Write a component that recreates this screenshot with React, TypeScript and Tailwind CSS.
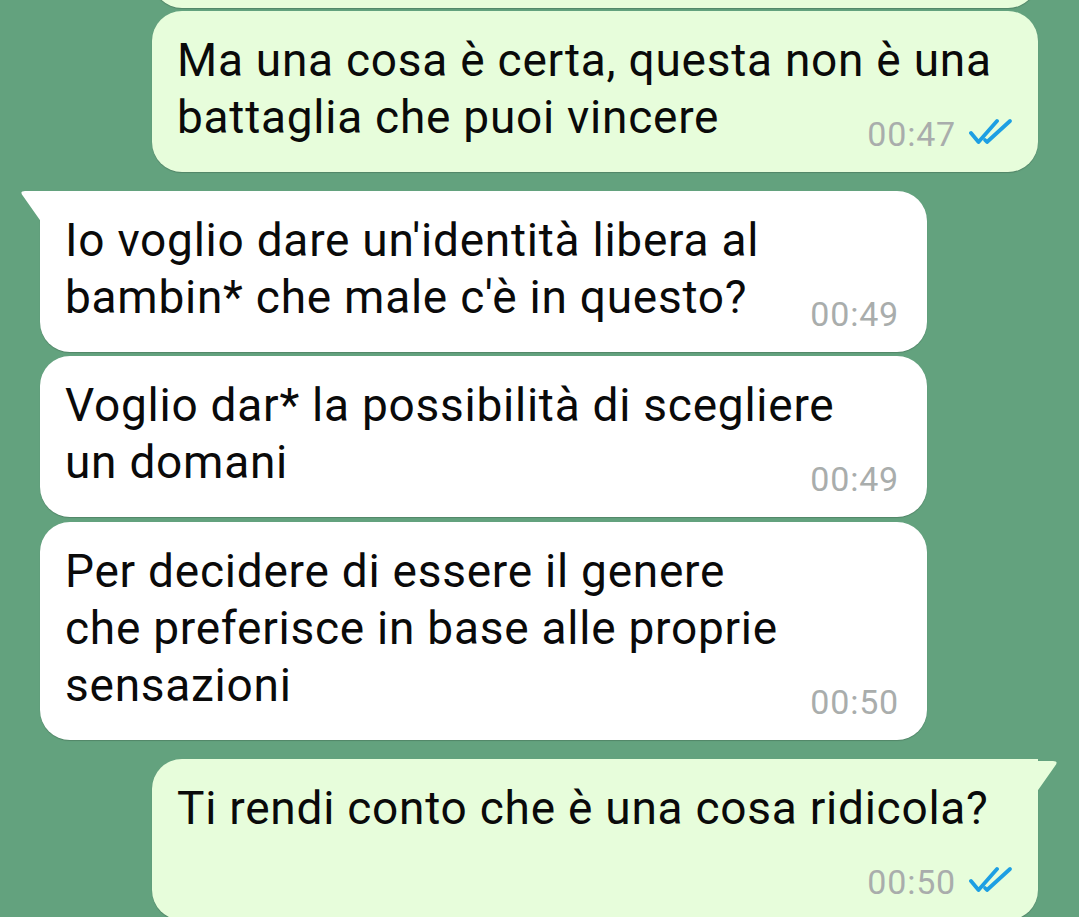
import React from "react";

type Msg = {
  side: "in" | "out";
  tail?: boolean;
  lines: string[];
  time: string;
  below?: boolean;
  mt: string;
};

const Check = () => (
  <svg width="44" height="28" viewBox="0 0 44 28" fill="none" className="ml-[13px] mt-[-4px]">
    <path d="M2 15 L9.5 24 L28 3" stroke="#1d9fe3" strokeWidth="3.8" strokeLinecap="round" strokeLinejoin="round" />
    <path d="M16 22 L18 24 L41 3" stroke="#1d9fe3" strokeWidth="3.8" strokeLinecap="round" strokeLinejoin="round" />
  </svg>
);

const Time = ({ time, out }: { time: string; out: boolean }) => (
  <span className="flex items-center h-[40px] text-[34px] leading-[40px] tracking-[0.8px] text-[#a9adac]">
    {time}
    {out && <Check />}
  </span>
);

const Bubble = ({ m }: { m: Msg }) => {
  const out = m.side === "out";
  const base = out
    ? "ml-[152px] w-[886px] bg-[#e7fddb] pr-[25px]"
    : "ml-[40px] w-[887px] bg-white pr-[28px]";
  const radius = m.tail
    ? out
      ? "rounded-[30px] rounded-tr-none"
      : "rounded-[30px] rounded-tl-none"
    : "rounded-[30px]";
  return (
    <div className={`${m.mt} relative shrink-0 ${base} ${radius} pl-[25px] pt-[21px] pb-[18px] shadow-[0_1px_1px_rgba(0,0,0,0.18)] flow-root`}>
      {m.tail && !out && (
        <svg className="absolute left-[-20px] top-0" width="22" height="34" viewBox="0 0 22 34">
          <path d="M22 0 H5 Q-1 0 3 5 L22 32 Z" fill="#ffffff" />
        </svg>
      )}
      {m.tail && out && (
        <svg className="absolute right-[-20px] top-[2px]" width="22" height="34" viewBox="0 0 22 34">
          <path d="M0 0 H17 Q23 0 19 5 L0 32 Z" fill="#e7fddb" />
        </svg>
      )}
      <div className="text-[46px] leading-[57px] tracking-[0.75px] text-[#0a0a0a] whitespace-nowrap">
        {m.lines.map((l, i) => (
          <React.Fragment key={i}>
            {l}
            {i < m.lines.length - 1 && <br />}
          </React.Fragment>
        ))}
        {!m.below && (
          <span className="float-right mt-[25px]">
            <Time time={m.time} out={out} />
          </span>
        )}
      </div>
      {m.below && (
        <div className="flex justify-end mt-[25px]">
          <Time time={m.time} out={out} />
        </div>
      )}
    </div>
  );
};

const msgs: Msg[] = [
  {
    side: "out",
    lines: ["Ma una cosa è certa, questa non è una", "battaglia che puoi vincere"],
    time: "00:47",
    mt: "mt-[3px]",
  },
  {
    side: "in",
    tail: true,
    lines: ["Io voglio dare un'identità libera al", "bambin* che male c'è in questo?"],
    time: "00:49",
    mt: "mt-[19px]",
  },
  {
    side: "in",
    lines: ["Voglio dar* la possibilità di scegliere", "un domani"],
    time: "00:49",
    mt: "mt-[4px]",
  },
  {
    side: "in",
    lines: ["Per decidere di essere il genere", "che preferisce in base alle proprie", "sensazioni"],
    time: "00:50",
    mt: "mt-[5px]",
  },
  {
    side: "out",
    tail: true,
    lines: ["Ti rendi conto che è una cosa ridicola?"],
    time: "00:50",
    below: true,
    mt: "mt-[19px]",
  },
];

export default function App() {
  return (
    <div
      className="w-[1079px] h-[917px] overflow-hidden bg-[#63a27e] flex flex-col"
      style={{ fontFamily: 'Roboto, "Liberation Sans", sans-serif' }}
    >
      <div className="shrink-0 ml-[152px] w-[886px] h-[100px] -mt-[92px] bg-[#e7fddb] rounded-[30px] shadow-[0_1px_1px_rgba(0,0,0,0.18)]" />
      {msgs.map((m, i) => (
        <Bubble key={i} m={m} />
      ))}
    </div>
  );
}
